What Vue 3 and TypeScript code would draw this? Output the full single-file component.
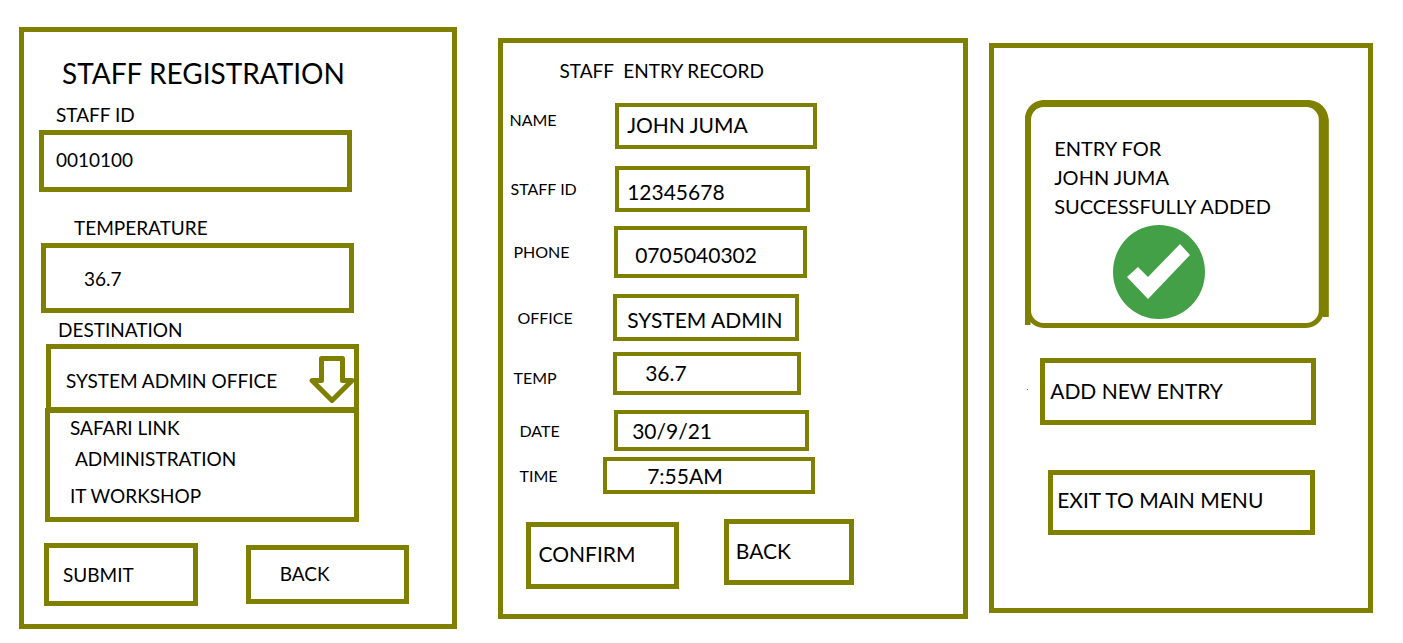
<script setup lang="ts">
import { ref } from 'vue'

interface RecordField {
  id: string
  label: string
  value: string
}

const staffId = ref('0010100')
const temperature = ref('36.7')
const destination = ref('SYSTEM ADMIN OFFICE')
const offices: string[] = ['SAFARI LINK', 'ADMINISTRATION', 'IT WORKSHOP']

const recordFields: RecordField[] = [
  { id: 'name', label: 'NAME', value: 'JOHN JUMA' },
  { id: 'staff', label: 'STAFF ID', value: '12345678' },
  { id: 'phone', label: 'PHONE', value: '0705040302' },
  { id: 'office', label: 'OFFICE', value: 'SYSTEM ADMIN' },
  { id: 'temp', label: 'TEMP', value: '36.7' },
  { id: 'date', label: 'DATE', value: '30/9/21' },
  { id: 'time', label: 'TIME', value: '7:55AM' },
]
</script>

<template>
  <main class="screens">
    <form class="panel registration" @submit.prevent>
      <h1 class="registration-title">STAFF REGISTRATION</h1>

      <label class="label label-id" for="staff-id">STAFF ID</label>
      <input id="staff-id" v-model="staffId" class="box field-id" type="text" />

      <label class="label label-temperature" for="temperature">TEMPERATURE</label>
      <input id="temperature" v-model="temperature" class="box field-temperature" type="text" />

      <label class="label label-destination" for="destination">DESTINATION</label>
      <div class="picker">
        <select id="destination" v-model="destination" class="box picker-select">
          <option>SYSTEM ADMIN OFFICE</option>
          <option v-for="office in offices" :key="office">{{ office }}</option>
        </select>
        <svg class="picker-arrow" viewBox="0 0 48 50" width="48" height="50" aria-hidden="true">
          <path
            d="M13.5 3.500H34.500V25.500H44L24 45.500L4 25.500H13.500Z"
            fill="none"
            stroke="#808000"
            stroke-width="5"
            stroke-linejoin="round"
          />
        </svg>
      </div>
      <ul class="box options" role="listbox" aria-label="DESTINATION">
        <li
          v-for="office in offices"
          :key="office"
          class="option"
          role="option"
          :aria-selected="destination === office"
          @click="destination = office"
        >
          {{ office }}
        </li>
      </ul>

      <div class="registration-actions">
        <button class="box submit" type="submit">SUBMIT</button>
        <button class="box back" type="button">BACK</button>
      </div>
    </form>

    <section class="panel record">
      <h2 class="record-title">STAFF&nbsp; ENTRY RECORD</h2>
      <div v-for="field in recordFields" :key="field.id" class="row" :class="`row-${field.id}`">
        <label class="row-label" :for="`record-${field.id}`">{{ field.label }}</label>
        <input
          :id="`record-${field.id}`"
          class="box row-value"
          type="text"
          :value="field.value"
          readonly
        />
      </div>
      <div class="record-actions">
        <button class="box confirm" type="button">CONFIRM</button>
        <button class="box record-back" type="button">BACK</button>
      </div>
    </section>

    <section class="panel result">
      <div class="notice">
        <svg class="notice-frame" viewBox="0 0 303 228" preserveAspectRatio="none" aria-hidden="true">
          <g fill="none" stroke="#808000">
            <path d="M2.500 225V20Q4 5 18 3H283Q298 5 300 20V217" stroke-width="6" />
            <rect x="3.500" y="4.500" width="292" height="221" rx="15" stroke-width="5" />
          </g>
        </svg>
        <p class="notice-text">ENTRY FOR<br />JOHN JUMA<br />SUCCESSFULLY ADDED</p>
        <svg class="notice-check" viewBox="0 0 92 94" width="92" height="94" aria-hidden="true">
          <ellipse cx="46" cy="47" rx="46" ry="47" fill="#43a047" />
          <path d="M14 52L25 42L35 52L67 19L77 30L35 74Z" fill="#fff" />
        </svg>
      </div>
      <button class="box add" type="button">ADD NEW ENTRY</button>
      <button class="box exit" type="button">EXIT TO MAIN MENU</button>
    </section>
  </main>
</template>

<style>
body {
  margin: 0;
  background: #fff;
}
</style>

<style scoped>
* {
  box-sizing: border-box;
}

.screens {
  display: flex;
  align-items: flex-start;
  padding: 27px 30px 14px 19px;
  color: #000;
  font-family: Lato, Carlito, Calibri, sans-serif;
  font-size: 19px;
}

.panel {
  display: flex;
  flex-direction: column;
  align-items: flex-start;
  min-width: 0;
  border: 5px solid #808000;
}

.box {
  display: block;
  margin: 0;
  padding: 0;
  border: 5px solid #808000;
  border-radius: 0;
  background: #fff;
  color: #000;
  font: inherit;
  text-align: left;
  appearance: none;
}

/* Registration form */
.registration {
  flex: 439 1 0;
  padding-bottom: 18px;
}

.registration-title {
  margin: 23px 0 12px 38px;
  font-size: 28px;
  font-weight: 400;
  line-height: 36px;
}

.label {
  line-height: 24px;
}

.label-id {
  margin-left: 32px;
}

.label-temperature {
  margin: 24px 0 0 50px;
}

.label-destination {
  margin: 5px 0 0 34px;
}

.field-id {
  width: 73%;
  height: 62px;
  margin: 3px 0 0 15px;
  padding: 0 0 4px 12px;
}

.field-temperature {
  width: 73%;
  height: 70px;
  margin: 3px 0 0 17px;
  padding-left: 38px;
}

.picker {
  display: grid;
  width: 73%;
  margin: 2px 0 0 22px;
}

.picker-select {
  grid-area: 1 / 1;
  width: 100%;
  height: 68px;
  padding: 4px 0 0 15px;
}

.picker-arrow {
  grid-area: 1 / 1;
  align-self: end;
  justify-self: end;
  margin: 0 3px 7px 0;
  pointer-events: none;
}

.options {
  align-self: stretch;
  margin: -4px 93px 0 21px;
  padding: 0 0 6px 20px;
  line-height: 30px;
  list-style: none;
}

.option:nth-child(2) {
  margin-top: 1px;
  padding-left: 5px;
}

.option:nth-child(3) {
  margin-top: 7px;
}

.registration-actions {
  display: grid;
  grid-template-columns: 154fr 164fr;
  column-gap: 48px;
  align-items: center;
  align-self: stretch;
  margin: 21px 43px 0 20px;
}

.submit {
  height: 63px;
  padding-left: 14px;
}

.back {
  height: 59px;
  padding: 0 0 2px 29px;
}

/* Entry record */
.record {
  flex: 471 1 0;
  margin: 11px 21px 0 41px;
  padding-bottom: 25px;
}

.record-title {
  margin: 14px 0 18px 56px;
  font-size: 19px;
  font-weight: 400;
  line-height: 28px;
}

.row {
  display: grid;
  grid-template-columns: 112fr 195fr 154fr;
  align-items: center;
  align-self: stretch;
  font-size: 21px;
}

.row-label {
  padding-left: 10px;
  font-size: 16px;
  line-height: 34px;
}

.row-value {
  width: 100%;
  border-width: 4px;
}

.row-name {
  grid-template-columns: 112fr 202fr 147fr;
  align-items: start;
}

.row-name .row-label {
  padding-left: 6px;
}

.row-name .row-value {
  height: 46px;
  padding: 0 0 4px 8px;
}

.row-staff {
  margin-top: 17px;
}

.row-staff .row-label {
  padding-left: 7px;
}

.row-staff .row-value {
  height: 46px;
  padding: 4px 0 0 8px;
}

.row-phone {
  grid-template-columns: 111fr 193fr 157fr;
  margin-top: 14px;
}

.row-phone .row-value {
  height: 52px;
  padding: 4px 0 0 17px;
}

.row-office {
  grid-template-columns: 110fr 186fr 165fr;
  margin-top: 16px;
}

.row-office .row-label {
  padding-left: 14px;
}

.row-office .row-value {
  height: 47px;
  padding: 4px 0 0 10px;
}

.row-temp {
  grid-template-columns: 110fr 188fr 163fr;
  align-items: end;
  margin-top: 11px;
}

.row-temp .row-value {
  height: 43px;
  padding: 0 0 2px 28px;
}

.row-date {
  grid-template-columns: 111fr 195fr 155fr;
  margin-top: 15px;
}

.row-date .row-label,
.row-time .row-label {
  padding-left: 16px;
}

.row-date .row-value {
  height: 41px;
  padding-left: 14px;
}

.row-time {
  grid-template-columns: 100fr 212fr 149fr;
  margin-top: 6px;
}

.row-time .row-value {
  height: 37px;
  padding-left: 40px;
}

.record-actions {
  display: grid;
  grid-template-columns: 153fr 131fr;
  column-gap: 45px;
  align-items: start;
  align-self: stretch;
  margin: 25px 109px 0 23px;
  font-size: 21px;
}

.confirm {
  height: 67px;
  margin-top: 3px;
  padding: 0 0 4px 7px;
}

.record-back {
  height: 66px;
  padding: 0 0 4px 7px;
}

/* Result */
.result {
  flex: 383 1 0;
  align-items: stretch;
  margin-top: 16px;
  padding-bottom: 73px;
  font-size: 21px;
}

.notice {
  position: relative;
  display: flex;
  flex-direction: column;
  height: 228px;
  margin: 52px 39px 0 31px;
  padding: 34px 0 0 29px;
}

.notice-frame {
  position: absolute;
  inset: 0;
  width: 100%;
  height: 100%;
}

.notice-text {
  margin: 0;
  font-size: 20px;
  line-height: 29px;
  white-space: nowrap;
}

.notice-check {
  margin: 4px 0 0 59px;
}

.add {
  position: relative;
  height: 67px;
  margin: 30px 52px 0 46px;
  padding: 0 0 2px 5px;
}

/* Small speck left of the button */
.add::before {
  content: '';
  position: absolute;
  top: 26px;
  left: -18px;
  width: 1px;
  height: 1px;
  background: #808000;
}

.exit {
  height: 65px;
  margin: 45px 53px 0 54px;
  padding: 0 0 6px 4px;
}
</style>
